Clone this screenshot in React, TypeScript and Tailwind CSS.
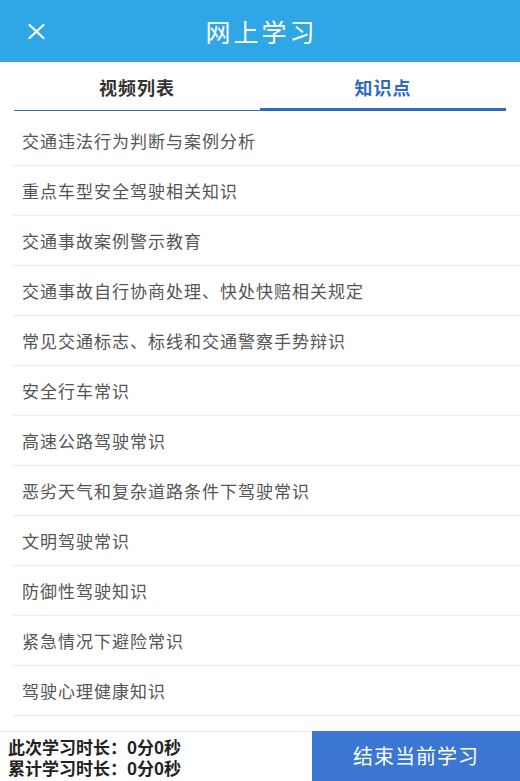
import React from "react";

const items = [
  "交通违法行为判断与案例分析",
  "重点车型安全驾驶相关知识",
  "交通事故案例警示教育",
  "交通事故自行协商处理、快处快赔相关规定",
  "常见交通标志、标线和交通警察手势辩识",
  "安全行车常识",
  "高速公路驾驶常识",
  "恶劣天气和复杂道路条件下驾驶常识",
  "文明驾驶常识",
  "防御性驾驶知识",
  "紧急情况下避险常识",
  "驾驶心理健康知识",
];

const font = { fontFamily: '"Noto Sans CJK SC", "Noto Sans", sans-serif' };

export default function App() {
  return (
    <div className="w-[520px] h-[781px] bg-white flex flex-col overflow-hidden" style={font}>
      <div className="h-[62px] bg-[#2fa6e5] flex items-center relative shrink-0">
        <svg className="absolute left-[28px] top-[24px]" width="17" height="15" viewBox="0 0 17 15">
          <path d="M1.5 1 L15.5 14 M15.5 1 L1.5 14" stroke="#fff" strokeWidth="2.2" strokeLinecap="round" />
        </svg>
        <div className="flex-1 text-center text-white text-[25px] tracking-[3px] leading-none pl-[3px]">网上学习</div>
      </div>
      <div className="px-[14px] shrink-0">
        <div className="flex h-[49px] border-b border-[#3b6fc0]">
          <div className="flex-1 flex items-center justify-center text-[18px] font-bold text-[#333] tracking-[1px] pt-[2px]">视频列表</div>
          <div className="flex-1 flex items-center justify-center text-[18px] font-bold text-[#2f6ac2] tracking-[1px] border-b-[3px] border-[#2f6ac2] mb-[-1px] pt-[5px]">知识点</div>
        </div>
      </div>
      <div className="flex-1 pt-[5px] pl-[13px]">
        {items.map((t) => (
          <div key={t} className="h-[50px] border-b border-[#ececec] flex items-center pl-[9px] text-[17px] tracking-[1px] text-[#555]">
            {t}
          </div>
        ))}
      </div>
      <div className="h-[50px] flex shrink-0 border-t border-[#e6e6e6]">
        <div className="flex-1 flex flex-col justify-center pl-[8px] text-[17px] font-bold text-[#222] leading-[21px]">
          <div>此次学习时长：0分0秒</div>
          <div>累计学习时长：0分0秒</div>
        </div>
        <div className="w-[208px] bg-[#3b77d2] flex items-center justify-center text-white text-[20px] tracking-[1px] mt-[-1px]">结束当前学习</div>
      </div>
    </div>
  );
}
